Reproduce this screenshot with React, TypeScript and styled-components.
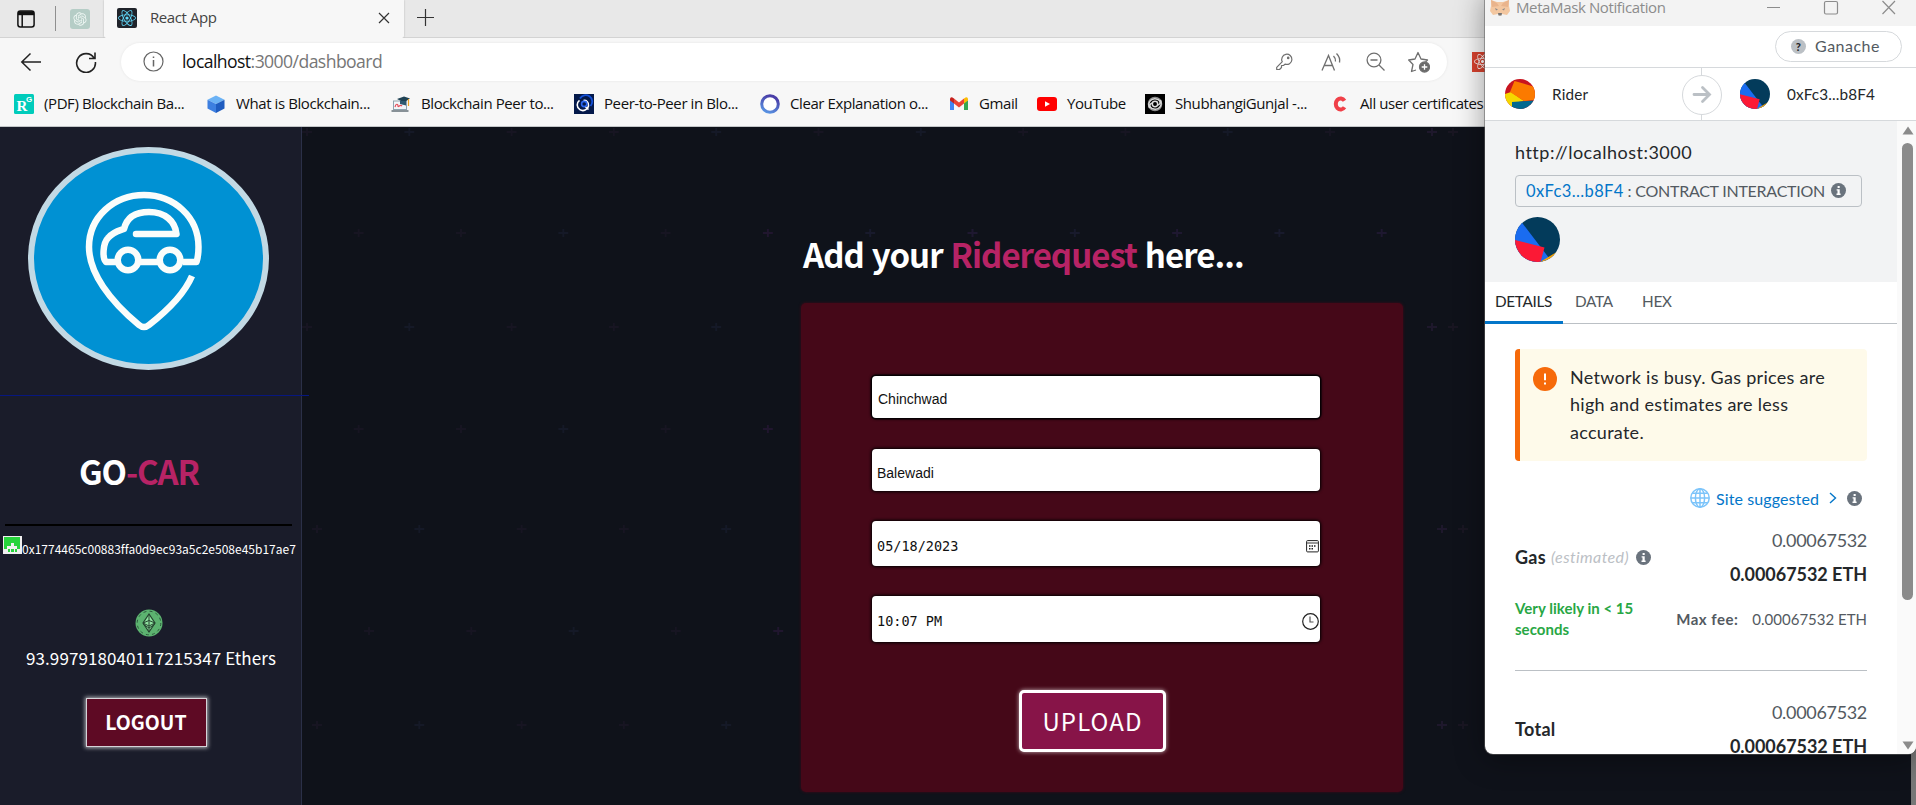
import React from "react";
import styled, { createGlobalStyle, css } from "styled-components";
import { FaReact } from "react-icons/fa";
import { RiOpenaiFill } from "react-icons/ri";

const segoe = `"Open Sans", "Noto Sans", sans-serif`;
const rounded = `"Noto Sans CJK JP", "Noto Sans", sans-serif`;
const euclid = `Lato, "Open Sans", sans-serif`;

const GlobalStyle = createGlobalStyle`
  * { box-sizing: border-box; }
  html, body { margin: 0; padding: 0; overflow: hidden; background: #0f121a; }
  svg { display: block; flex: none; }
`;

const Screen = styled.div`
  position: relative;
  display: flex;
  flex-direction: column;
  width: 1916px;
  height: 805px;
  overflow: hidden;
`;

/* ---------- browser chrome ---------- */

const Chrome = styled.header`
  flex: none;
  height: 127px;
  background: #f7f7f7;
  border-bottom: 1px solid #c3c6c8;
  font-family: ${segoe};
  color: #111;
`;

const TabStrip = styled.div`
  display: flex;
  height: 38px;
  background: #e8e8e8;
  border-bottom: 1px solid #d3d3d3;
`;

const PinnedTabs = styled.div`
  display: flex;
  align-items: center;
  width: 104px;
  height: 37px;
  padding-left: 17px;
`;

const StripDivider = styled.span`
  width: 1px;
  height: 25px;
  margin: 0 14px 0 20px;
  background: #8f8f8f;
`;

const PinnedIcon = styled.span`
  display: grid;
  place-items: center;
  width: 20px;
  height: 20px;
  border-radius: 3px;
  background: #b5cdc6;
  color: #eef6f3;
`;

const ActiveTab = styled.div`
  display: flex;
  align-items: center;
  width: 300px;
  height: 38px;
  padding: 0 14px 2px 13px;
  background: #f7f7f7;
  border-radius: 0 0 2px 2px;
  box-shadow: 0 0 2px rgba(0, 0, 0, 0.25);
  clip-path: inset(0 -3px 0 -3px);
`;

const ReactBadge = styled.span`
  display: grid;
  place-items: center;
  width: 20px;
  height: 20px;
  border-radius: 2px;
  background: #20232a;
  color: #61dafb;
`;

const TabTitle = styled.span`
  flex: 1;
  padding: 0 0 2px 13px;
  font-size: 15px;
  line-height: 20px;
  letter-spacing: -0.42px;
  color: #444;
`;

const NewTab = styled.span`
  padding: 9px 0 0 13px;
`;

const Toolbar = styled.div`
  display: flex;
  align-items: center;
  height: 47px;
  padding-left: 20px;
`;

const AddressBar = styled.div`
  display: flex;
  align-items: center;
  width: 1326px;
  height: 38px;
  margin-left: 24px;
  padding: 0 17px 0 22px;
  border-radius: 19px;
  background: #fff;
  box-shadow: 0 0 3px rgba(0, 0, 0, 0.08);
`;

const Url = styled.span`
  flex: 1;
  padding: 0 0 1px 18px;
  font-size: 17.6px;
  line-height: 24px;
  letter-spacing: -0.57px;
  color: #767676;
  b { font-weight: 400; color: #111; }
`;

const AddressTools = styled.div`
  display: flex;
  align-items: center;
  gap: 23px;
`;

const Extension = styled.span`
  display: grid;
  place-items: center;
  width: 20px;
  height: 20px;
  margin-left: 25px;
  background: #d9432f;
  color: #fff;
`;

const Bookmarks = styled.nav`
  display: flex;
  height: 38px;
  padding-left: 14px;
`;

const Bookmark = styled.span<{ $width: number }>`
  display: flex;
  align-items: center;
  flex: none;
  gap: 10px;
  width: ${(p) => p.$width}px;
  font-size: 15px;
  line-height: 20px;
  letter-spacing: -0.41px;
  white-space: nowrap;
`;

const BookmarkText = styled.span`
  padding-bottom: 2px;
`;

/* ---------- page ---------- */

const Page = styled.div`
  position: relative;
  display: flex;
  flex: 1;
  min-height: 0;
  background: #0f121a;
`;

const Starfield = styled.svg`
  position: absolute;
  inset: 0;
`;

const Sidebar = styled.aside`
  position: relative;
  display: flex;
  flex-direction: column;
  align-items: flex-start;
  width: 302px;
  background: #1a1c2a;
  border-right: 1px solid #2b3048;
  font-family: ${rounded};
  color: #fff;
`;

const SidebarRule = styled.span`
  position: absolute;
  left: 0;
  top: 268px;
  width: 309px;
  height: 1px;
  background: #07177f;
`;

const Logo = styled.div`
  width: 241px;
  height: 223px;
  margin: 20px 0 0 28px;
  border: 6px solid #c2d9e4;
  border-radius: 50%;
  background: #0091d3;
  overflow: hidden;
`;

const Accent = styled.span`
  color: #b72365;
`;

const Brand = styled.h1`
  margin: 77px 0 0 79px;
  font-size: 33px;
  line-height: 48px;
  letter-spacing: -1.1px;
  font-weight: 700;
`;

const Rule = styled.hr`
  width: 287px;
  height: 2px;
  margin: 29px 0 0 5px;
  border: 0;
  background: #000;
`;

const Account = styled.div`
  display: flex;
  margin: 10px 0 0 3px;
  font-size: 12px;
  line-height: 25px;
  height: 18px;
  letter-spacing: 0.01px;
`;

const CoinSlot = styled.div`
  margin: 55px 0 0 135px;
`;

const Balance = styled.p`
  margin: 8px 0 0 26px;
  font-size: 17px;
  line-height: 26px;
  letter-spacing: 0.09px;
  white-space: nowrap;
`;

const Logout = styled.button`
  width: 121px;
  height: 49px;
  margin: 27px 0 0 85.5px;
  padding: 0 0 3px;
  border: 1px solid #d6d3d8;
  background: #5e0a24;
  box-shadow: 0 0 4px 1px rgba(255, 255, 255, 0.65);
  font: 700 19.5px ${rounded};
  letter-spacing: 0;
  color: #fff;
`;

const Main = styled.main`
  position: relative;
  flex: 1;
  padding: 102px 0 0 499px;
`;

const Heading = styled.h2`
  margin: 0 0 24px;
  padding-left: 2px;
  font: 700 33px/50px ${rounded};
  letter-spacing: -0.95px;
  word-spacing: 1.3px;
  color: #fff;
  white-space: nowrap;
`;

const Card = styled.form`
  display: flex;
  flex-direction: column;
  width: 602px;
  height: 489px;
  padding: 73px 71px 0;
  border-radius: 5px;
  background: #450818;
  box-shadow: 0 0 3px #450818;
`;

const Field = styled.label<{ $height: number; $gap: number; $drop: number; $mono?: boolean; $focus?: boolean }>`
  display: flex;
  align-items: center;
  justify-content: space-between;
  width: 448px;
  height: ${(p) => p.$height}px;
  margin-bottom: ${(p) => p.$gap}px;
  padding: ${(p) => p.$drop}px 1px 0 ${(p) => (p.$focus ? 6 : 5)}px;
  border-radius: 4px;
  background: #fff;
  box-shadow: 0 0 3px 1px ${(p) => (p.$focus ? "#000, 0 0 0 1.5px #12020a" : "#000")};
  color: #111;
  ${(p) =>
    p.$mono
      ? css`font: 13.5px "DejaVu Sans Mono", monospace;`
      : css`font: 14px "Liberation Sans", Arial, sans-serif;`}
`;

const Upload = styled.button`
  width: 147px;
  height: 62px;
  margin: 18px 0 0 147px;
  padding: 0 0 2px;
  border: 3px solid #fff;
  border-radius: 5px;
  background: #871448;
  box-shadow: 0 0 4px rgba(255, 255, 255, 0.7);
  font: 400 24px ${rounded};
  letter-spacing: 1.1px;
  color: #fff;
`;

const PageScrollbar = styled.span`
  position: absolute;
  right: 0;
  top: 0;
  width: 5px;
  height: 100%;
  background: #777;
`;

/* ---------- wallet popup window ---------- */

const Popup = styled.section`
  position: absolute;
  left: 1485px;
  top: 0;
  display: flex;
  flex-direction: column;
  width: 431px;
  height: 754px;
  overflow: hidden;
  border-radius: 0 0 8px 8px;
  background: #fff;
  font-family: ${euclid};
  color: #24272a;
`;

const PopupShadow = styled.div`
  position: absolute;
  left: 1485px;
  top: -10px;
  width: 431px;
  height: 764px;
  border-radius: 8px;
  box-shadow: 0 0 0 1px rgba(95, 95, 95, 0.55), 0 4px 30px rgba(0, 0, 0, 0.4);
`;

const TitleBar = styled.div`
  display: flex;
  flex: none;
  height: 26px;
  padding-left: 5px;
  background: #f3f3f3;
  font: 15px/17px ${segoe};
  letter-spacing: -0.38px;
  color: #8c8c8c;
`;

const WindowTitle = styled.span`
  flex: 1;
  padding-left: 6px;
  margin-top: -1px;
`;

const WindowButtons = styled.span`
  padding: 0 20px 0 0;
`;

const NetworkBar = styled.div`
  display: flex;
  flex: none;
  justify-content: flex-end;
  height: 42px;
  padding: 5px 14px 0 0;
  border-bottom: 1px solid #d6d9dc;
`;

const NetworkPill = styled.div`
  display: flex;
  align-items: center;
  width: 127px;
  height: 31px;
  padding: 0 0 1px 15px;
  gap: 9px;
  border: 1px solid #d6d9dc;
  border-radius: 16px;
  font-size: 16px;
  line-height: 20px;
  letter-spacing: 0.5px;
  color: #535a61;
`;

const Parties = styled.div`
  display: flex;
  flex: none;
  height: 53px;
  border-bottom: 1px solid #d6d9dc;
`;

const Party = styled.div<{ $width: number; $pad: number; $gap: number; $spacing: number }>`
  display: flex;
  align-items: center;
  width: ${(p) => p.$width}px;
  padding-left: ${(p) => p.$pad}px;
  gap: ${(p) => p.$gap}px;
  font-size: 15.3px;
  line-height: 20px;
  letter-spacing: ${(p) => p.$spacing}px;
`;

const Body = styled.div`
  display: flex;
  flex: 1;
  min-height: 0;
`;

const Scroller = styled.div`
  width: 412px;
  overflow: hidden;
`;

const ScrollTrack = styled.div`
  display: flex;
  flex-direction: column;
  justify-content: space-between;
  align-items: center;
  width: 19px;
  padding: 5px 0 4px 2px;
  background: #fafafa;
`;

const Thumb = styled.span`
  width: 11px;
  height: 457px;
  margin: 8px 0 auto;
  border-radius: 6px;
  background: #8b8b8b;
`;

const Summary = styled.div`
  height: 161px;
  padding: 19px 30px 0;
  background: #f2f3f4;
`;

const Origin = styled.p`
  margin: 0 0 11px;
  font-size: 18px;
  line-height: 24px;
  letter-spacing: 0.5px;
`;

const Contract = styled.div`
  display: flex;
  align-items: center;
  width: 347px;
  height: 32px;
  margin-bottom: 10px;
  padding: 0 0 1px 10px;
  border: 1px solid #bbc0c5;
  border-radius: 4px;
  white-space: pre;
  font-size: 16px;
  letter-spacing: -0.25px;
  color: #535a61;
  svg { margin-left: 6px; }
`;

const Address = styled.span`
  font-size: 16.5px;
  letter-spacing: 0.38px;
  color: #0376c9;
`;

const Tabs = styled.div`
  display: flex;
  height: 42px;
  border-bottom: 1px solid #bbc0c5;
`;

const Tab = styled.span<{ $width: number; $active?: boolean }>`
  width: ${(p) => p.$width}px;
  height: 42px;
  padding-left: ${(p) => (p.$active ? 10 : 12)}px;
  font-size: 15.3px;
  line-height: 39px;
  letter-spacing: -0.3px;
  color: ${(p) => (p.$active ? "#24272a" : "#535a61")};
  border-bottom: ${(p) => (p.$active ? "3px solid #0376c9" : "0")};
`;

const Details = styled.div`
  padding: 25px 30px 0;
`;

const Alert = styled.div`
  display: flex;
  width: 352px;
  height: 112px;
  padding: 15px 0 0 13px;
  gap: 13px;
  border-left: 5px solid #f66a0a;
  border-radius: 4px;
  background: #fefaea;
  font-size: 18px;
  line-height: 27.4px;
  letter-spacing: 0.28px;
  svg { margin-top: 3px; }
`;

const Suggested = styled.div`
  display: flex;
  align-items: center;
  justify-content: flex-end;
  height: 20px;
  margin: 27px 5px 20px 0;
  font-size: 16px;
  letter-spacing: 0.1px;
  color: #0376c9;
`;

const SuggestedText = styled.span`
  margin: 0 10px 0 6px;
`;

const Row = styled.div`
  display: flex;
  align-items: center;
  justify-content: space-between;
`;

const RowLabel = styled.div`
  display: flex;
  align-items: center;
  font-size: 18px;
  line-height: 24px;
  font-weight: 700;
  letter-spacing: 0.3px;
`;

const Estimated = styled.em`
  margin: 0 7px 0 5px;
  font-size: 16px;
  font-weight: 400;
  letter-spacing: 0.4px;
  color: #bbc0c5;
`;

const Amounts = styled.div`
  display: flex;
  flex-direction: column;
  gap: 10px;
  text-align: right;
  font-size: 18px;
  line-height: 24px;
`;

const Fiat = styled.span`
  letter-spacing: -0.32px;
  color: #535a61;
`;

const Eth = styled.strong`
  letter-spacing: -0.04px;
`;

const Likely = styled.p`
  margin: 0;
  font-size: 15px;
  line-height: 21px;
  font-weight: 700;
  letter-spacing: 0.03px;
  color: #28a745;
`;

const MaxFee = styled.div`
  display: flex;
  gap: 14px;
  padding-bottom: 1px;
  font-size: 15px;
  color: #535a61;
  strong { letter-spacing: 0.5px; }
`;

const FeeRow = styled(Row)`
  height: 42px;
  margin: 12px 0 30px;
`;

const Divider = styled.hr`
  height: 1px;
  margin: 0 0 29px;
  border: 0;
  background: #bbc0c5;
`;

/* ---------- drawings ---------- */

const PLUS = "M-5 0H5M0 -4V4";
const rowsOfPluses = [
  { x: 307, y: 5, tint: [0, 1, 0, 0, 1] },
  { x: 358.7, y: 106, tint: [0, 0, 1, 0, 2] },
  { x: 307, y: 200, tint: [0, 1, 0, 0, 1] },
  { x: 358.7, y: 302, tint: [0, 0, 1, 0, 2] },
  { x: 317, y: 402, tint: [0, 1, 0, 0, 1] },
  { x: 369, y: 504, tint: [0, 0, 1, 0, 2] },
  { x: 317, y: 598, tint: [0, 1, 0, 0, 1] },
];
const tints = ["#171522", "#151927", "#20162e"];

function Stars() {
  return (
    <Starfield width="1916" height="678">
      {rowsOfPluses.map((row, r) =>
        Array.from({ length: 11 }, (_, i) => (
          <path
            key={`${r}-${i}`}
            d={PLUS}
            transform={`translate(${row.x + i * 102.3} ${row.y})`}
            stroke={i > 4 && r === 1 ? (i % 2 ? "#181a2c" : "#1e1830") : tints[row.tint[i % 5]]}
            strokeWidth="2"
          />
        ))
      )}
      {[[1432, 5], [1453, 5], [1432, 200], [1453, 200], [1442, 402], [1463, 402], [1442, 598], [1463, 598]].map(
        ([x, y], i) => (
          <path key={i} d={PLUS} transform={`translate(${x} ${y})`} stroke={i % 2 ? "#191622" : "#1e182c"} strokeWidth="2" />
        )
      )}
    </Starfield>
  );
}

const InfoDot = () => (
  <svg width="15" height="15" viewBox="0 0 15 15">
    <circle cx="7.5" cy="7.5" r="7.5" fill="#6a737d" />
    <rect x="6.6" y="3" width="2.1" height="2" fill="#fff" />
    <path d="M5.6 6.2H8.7V10.6H9.6V11.9H5.5V10.6H6.5V7.4H5.6Z" fill="#fff" />
  </svg>
);

const BlueAvatar = ({ size }: { size: number }) => (
  <svg width={size} height={size} viewBox="0 0 45 45">
    <clipPath id={`round${size}`}><circle cx="22.5" cy="22.5" r="22.5" /></clipPath>
    <g clipPath={`url(#round${size})`}>
      <rect width="45" height="45" fill="#033b5b" />
      <path d="M0 0H3L8 7L34 41L45 36V45H0Z" fill="#1a6cf0" />
      <path d="M25 45L45 33V45Z" fill="#f9a300" />
      <path d="M0 23L29.5 30.5L25.5 45H0Z" fill="#fb1935" />
    </g>
  </svg>
);

const RiderAvatar = () => (
  <svg width="30" height="30" viewBox="0 0 30 30">
    <clipPath id="rider"><circle cx="15" cy="15" r="15" /></clipPath>
    <g clipPath="url(#rider)">
      <rect width="30" height="30" fill="#c8141f" />
      <path d="M0 15L6 13L19 22L8 24V30H0Z" fill="#f5d800" />
      <path d="M9.5 2L30 8V21L19 22L5 13Z" fill="#fb7a00" />
      <path d="M7 23L30 21.5V30H7Z" fill="#01688f" />
    </g>
  </svg>
);

const CarPin = () => (
  <svg width="229" height="211" viewBox="34 153 229 211" fill="none" stroke="#fafdfb" strokeWidth="6.5" strokeLinejoin="round">
    <path d="M192 276C186 290 172 307 149 325Q144 329 139 325C110 301 89 273 89 247C89 217 114 195 144 195C174 195 198.5 217 198.5 247Q198.5 256 196.5 262H183" />
    <path d="M157 262H141M115 262H106C102 258 103 243 108 238C113 232 118 231 124 229C127 216 137 212 149 212C165 212 175 221 176.5 234H136" strokeLinecap="round" />
    <circle cx="128" cy="260" r="10.3" />
    <circle cx="170" cy="260" r="10.3" />
  </svg>
);

const Coin = () => (
  <svg width="28" height="28" viewBox="0 0 28 28">
    <circle cx="14" cy="14" r="13.5" fill="#5cb370" />
    <circle cx="14" cy="14" r="11.8" fill="none" stroke="#2c5a3c" strokeWidth="1" strokeDasharray="3 3.2" />
    <path d="M14 5L20 14L14 23L8 14Z" fill="#8fe3a0" stroke="#24442f" strokeWidth="1.2" />
    <path d="M14 5V23M8 14L14 11.5L20 14M8 14L14 17L20 14M8.5 15.5L14 19L19.5 15.5" fill="none" stroke="#24442f" strokeWidth="1" />
  </svg>
);

const Identicon = () => (
  <svg width="19" height="18" viewBox="0 0 19 18" shapeRendering="crispEdges">
    <rect width="19" height="18" fill="#f0f0f0" />
    <path d="M1 1H17V13H1Z" fill="#27d43c" />
    <path d="M8 7H11V10H14V13H15V16H12V13H11V16H8V13H7V16H4V10H8Z" fill="#f0f0f0" />
    <path d="M5 13H7V16H5ZM12 13H14V16H12ZM8 13H11V16H8Z" fill="#27d43c" />
    <path d="M1 13H4V16H1Z" fill="#f0f0f0" />
  </svg>
);

const Fox = () => (
  <svg width="20" height="17" viewBox="0 0 20 17">
    <path d="M1 0L7 2H13L19 0V6L20 11L17 15L12 14L10 16L8 14L3 15L0 11L1 6Z" fill="#f3c7a0" />
    <path d="M1 0L7 3L9 6L2 7ZM19 0L13 3L11 6L18 7Z" fill="#e9b48c" />
    <path d="M5 8L8 9.5L6 10.5ZM15 8L12 9.5L14 10.5Z" fill="#8d8b8b" />
    <path d="M8 13H12L11.5 15.5H8.5Z" fill="#777" />
  </svg>
);

const bookmarks: { text: string; width: number; icon: React.ReactNode }[] = [
  {
    text: "(PDF) Blockchain Ba...",
    width: 192,
    icon: (
      <svg width="20" height="20" viewBox="0 0 20 20">
        <rect width="20" height="20" rx="1.5" fill="#00ccbb" />
        <text x="2.5" y="16.5" fontFamily="Liberation Serif, serif" fontWeight="700" fontSize="15" fill="#fff">R</text>
        <text x="12" y="8.3" fontFamily="Liberation Sans, sans-serif" fontWeight="700" fontSize="8" fill="#fff">G</text>
      </svg>
    ),
  },
  {
    text: "What is Blockchain...",
    width: 185,
    icon: (
      <svg width="20" height="20" viewBox="0 0 20 20">
        <path d="M10 1.5L18.5 5.7L10 10L1.5 5.7Z" fill="#6bb2f5" />
        <path d="M1.5 5.7L10 10V19L1.5 14.5Z" fill="#3d7fe0" />
        <path d="M18.5 5.7L10 10V19L18.5 14.5Z" fill="#1f5cc0" />
      </svg>
    ),
  },
  {
    text: "Blockchain Peer to...",
    width: 183,
    icon: (
      <svg width="20" height="20" viewBox="0 0 20 20">
        <rect x="2.5" y="7" width="13" height="8.5" fill="#f3f6f8" stroke="#8fa3ae" />
        <path d="M0.5 17H17.5" stroke="#7b858c" strokeWidth="1.8" />
        <path d="M4 13C5 9 7 10 7 12S9 10 11 12" stroke="#e64b58" strokeWidth="1.2" fill="none" />
        <path d="M6 5L13 2.500L19 4.500L13 8.500Z" fill="#1f4254" />
        <path d="M9 7V10L15 11.5V7" fill="#2f5a70" />
        <path d="M17.5 5V12" stroke="#e9a227" strokeWidth="1.2" />
      </svg>
    ),
  },
  {
    text: "Peer-to-Peer in Blo...",
    width: 186,
    icon: (
      <svg width="20" height="20" viewBox="0 0 20 20" fill="none">
        <rect width="20" height="20" fill="#04194a" />
        <path d="M6 4.500A6.500 6.500 0 1 1 16.500 12" stroke="#1450d8" strokeWidth="1.8" />
        <path d="M5.500 6.300A5.700 5.700 0 1 0 14.500 12C15 8 12 6 9.500 6.500" stroke="#fff" strokeWidth="1.6" />
        <circle cx="10.200" cy="10" r="2.600" stroke="#2b66f0" strokeWidth="1.6" />
        <path d="M11.500 13L14.500 15.500" stroke="#fff" strokeWidth="1.4" />
      </svg>
    ),
  },
  {
    text: "Clear Explanation o...",
    width: 189,
    icon: (
      <svg width="20" height="20" viewBox="0 0 20 20">
        <linearGradient id="ring" x1="0" y1="1" x2="0.4" y2="0">
          <stop offset="0" stopColor="#5a9be8" />
          <stop offset="1" stopColor="#4a3fa8" />
        </linearGradient>
        <circle cx="10" cy="10" r="8.3" fill="#fff" stroke="url(#ring)" strokeWidth="3" />
      </svg>
    ),
  },
  {
    text: "Gmail",
    width: 88,
    icon: (
      <svg width="20" height="20" viewBox="0 0 20 20">
        <path d="M1 6V16H5V8.5Z" fill="#4285f4" />
        <path d="M19 6V16H15V8.5Z" fill="#34a853" />
        <path d="M5 4.5L10 8.5L15 4.5V9.5L10 13.5L5 9.5Z" fill="#ea4335" />
        <path d="M1 5Q1 3 3 3.2L5 4.5V9.5L1 6.5Z" fill="#c5221f" />
        <path d="M19 5Q19 3 17 3.2L15 4.5V9.5L19 6.5Z" fill="#fbbc04" />
      </svg>
    ),
  },
  {
    text: "YouTube",
    width: 108,
    icon: (
      <svg width="20" height="20" viewBox="0 0 20 20">
        <rect y="3" width="20" height="14" rx="3" fill="#f00" />
        <path d="M8 7.3V12.7L13 10Z" fill="#fff" />
      </svg>
    ),
  },
  {
    text: "ShubhangiGunjal -...",
    width: 185,
    icon: (
      <svg width="20" height="20" viewBox="0 0 20 20" fill="none">
        <rect width="20" height="20" fill="#000" />
        <circle cx="10" cy="10" r="6.7" stroke="#8a8a8a" strokeWidth="1.2" />
        <circle cx="10" cy="10" r="2.7" stroke="#ddd" strokeWidth="1.5" />
        <path d="M4.500 14C2 8 7 3 13 5.500C16 7 15.500 10 13 11M15.500 6C18 12 13 17 7 14.500C4 13 4.500 10 7 9" stroke="#d8d8d8" strokeWidth="1.4" />
      </svg>
    ),
  },
  {
    text: "All user certificates",
    width: 160,
    icon: (
      <svg width="20" height="20" viewBox="0 0 20 20" fill="none">
        <path d="M14.5 6.8A4.8 5.5 0 1 0 14.5 13.2" stroke="#f04048" strokeWidth="4" />
      </svg>
    ),
  },
];

export default function App() {
  return (
    <Screen>
      <GlobalStyle />
      <Chrome>
        <TabStrip>
          <PinnedTabs>
            <svg width="18" height="18" viewBox="0 0 18 18" fill="none" stroke="#111" strokeWidth="1.5">
              <rect x="0.9" y="0.9" width="16.2" height="16.2" rx="2.5" />
              <path d="M1 3.2H17" strokeWidth="4" />
              <path d="M5.2 4V17" />
            </svg>
            <StripDivider />
            <PinnedIcon><RiOpenaiFill size={16} /></PinnedIcon>
          </PinnedTabs>
          <ActiveTab>
            <ReactBadge><FaReact size={18} /></ReactBadge>
            <TabTitle>React App</TabTitle>
            <svg width="12" height="12" viewBox="0 0 12 12" stroke="#333" strokeWidth="1.2">
              <path d="M1 1L11 11M11 1L1 11" />
            </svg>
          </ActiveTab>
          <NewTab>
            <svg width="17" height="17" viewBox="0 0 17 17" stroke="#333" strokeWidth="1.2">
              <path d="M8.5 0V17M0 8.5H17" />
            </svg>
          </NewTab>
        </TabStrip>
        <Toolbar>
          <svg width="21" height="20" viewBox="0 0 21 20" fill="none" stroke="#222" strokeWidth="1.5">
            <path d="M21 10H2M10.5 1.5L1.8 10L10.5 18.5" />
          </svg>
          <svg width="56" height="22" viewBox="0 0 56 22" fill="none" stroke="#222" strokeWidth="1.6">
            <path d="M53 7A9.4 9.4 0 1 0 54.4 11M54 1.5V7.5H48" />
          </svg>
          <AddressBar>
            <svg width="21" height="21" viewBox="0 0 21 21" fill="none" stroke="#666" strokeWidth="1.2">
              <circle cx="10.5" cy="10.5" r="9.5" />
              <path d="M10.5 9V15.5M10.5 5.5V7" strokeWidth="1.5" />
            </svg>
            <Url><b>localhost</b>:3000/dashboard</Url>
            <AddressTools>
              <svg width="20" height="18" viewBox="0 0 20 18" fill="none" stroke="#6f6f6f" strokeWidth="1.2">
                <path d="M6.300 8.700A5.1 5.1 0 1 1 9 11.100L7.500 12.500H5.500V14.5L3.500 16.500H0.700V14.3Z" strokeLinejoin="round" />
                <circle cx="12.200" cy="4.900" r="0.7" fill="#6f6f6f" />
              </svg>
              <svg width="24" height="20" viewBox="0 0 24 20" fill="none" stroke="#6f6f6f" strokeWidth="1.3">
                <path d="M3 18.500L9.500 3.5L15.500 18.500M5.5 13.500H13.5M14.5 4Q17 6.5 16.5 9.5M17.5 1.5Q21.5 5.5 20.5 10.5" />
              </svg>
              <svg width="19" height="19" viewBox="0 0 19 19" fill="none" stroke="#6f6f6f" strokeWidth="1.3">
                <circle cx="8" cy="8" r="6.9" />
                <path d="M13 13L18.5 18.5M4.5 8H11.5" />
              </svg>
              <svg width="22" height="22" viewBox="1 0 22 22" fill="none" stroke="#6f6f6f" strokeWidth="1.3" strokeLinejoin="round">
                <path d="M9 19L4.500 20.5L6 13.5L1.7 9L8 8L11 1.500L14 8L20.5 9L18.5 11" />
                <circle cx="17.500" cy="16" r="5" fill="#6a6a6a" />
                <path d="M14.700 16H20.300M17.500 13.2V18.8" stroke="#fff" />
              </svg>
            </AddressTools>
          </AddressBar>
          <Extension><FaReact size={17} /></Extension>
        </Toolbar>
        <Bookmarks>
          {bookmarks.map((b) => (
            <Bookmark key={b.text} $width={b.width}>{b.icon}<BookmarkText>{b.text}</BookmarkText></Bookmark>
          ))}
        </Bookmarks>
      </Chrome>

      <Page>
        <Stars />
        <Sidebar>
          <Logo><CarPin /></Logo>
          <SidebarRule />
          <Brand>GO<Accent>-CAR</Accent></Brand>
          <Rule />
          <Account><Identicon />0x1774465c00883ffa0d9ec93a5c2e508e45b17ae7</Account>
          <CoinSlot><Coin /></CoinSlot>
          <Balance>93.997918040117215347 Ethers</Balance>
          <Logout>LOGOUT</Logout>
        </Sidebar>
        <Main>
          <Heading>Add your <Accent>Riderequest</Accent> here...</Heading>
          <Card>
            <Field $height={42} $gap={31} $drop={4} $focus>Chinchwad</Field>
            <Field $height={42} $gap={30} $drop={5}>Balewadi</Field>
            <Field $height={45} $gap={30} $drop={5} $mono>
              05/18/2023
              <svg width="13" height="13" viewBox="0 0 13 13" fill="none" stroke="#222">
                <rect x="0.6" y="0.6" width="11.8" height="11.3" rx="1" />
                <path d="M1 3H12" strokeWidth="1.5" stroke="#777" />
                <path d="M3 6H10.5M3 8.8H8" strokeWidth="1.5" strokeDasharray="1.5 1" />
              </svg>
            </Field>
            <Field $height={46} $gap={30} $drop={4} $mono>
              10:07 PM
              <svg width="17" height="17" viewBox="0 0 17 17" fill="none" stroke="#222" strokeWidth="1.2">
                <circle cx="8.5" cy="8.5" r="7.8" />
                <path d="M8 3.5V9H11.5" stroke="#555" />
              </svg>
            </Field>
            <Upload type="button">UPLOAD</Upload>
          </Card>
        </Main>
        <PageScrollbar />
      </Page>

      <PopupShadow />
      <Popup>
        <TitleBar>
          <Fox />
          <WindowTitle>MetaMask Notification</WindowTitle>
          <WindowButtons>
            <svg width="130" height="17" viewBox="0 0 130 17" fill="none" stroke="#8c8c8c" strokeWidth="1.2">
              <path d="M1 7.5H14M116.5 1L129 14M129 1L116.5 14" />
              <rect x="58.5" y="1.5" width="13" height="12.5" rx="1.5" />
            </svg>
          </WindowButtons>
        </TitleBar>
        <NetworkBar>
          <NetworkPill>
            <svg width="15" height="15" viewBox="0 0 15 15">
              <circle cx="7.5" cy="7.5" r="7.5" fill="#bbc0c5" />
              <text x="7.5" y="11.5" textAnchor="middle" fontFamily="Lato, sans-serif" fontWeight="900" fontSize="11" fill="#24272a">?</text>
            </svg>
            Ganache
          </NetworkPill>
        </NetworkBar>
        <Parties>
          <Party $width={186} $pad={20} $gap={17} $spacing={0.15}><RiderAvatar />Rider</Party>
          <svg width="62" height="52" viewBox="0 0 62 52" fill="none">
            <path d="M30.5 0V52" stroke="#d6d9dc" />
            <circle cx="31" cy="27" r="19.5" fill="#fff" stroke="#d6d9dc" />
            <path d="M23 26.5H38M31.5 19.5L38.5 26.5L31.5 33.5" stroke="#bbc0c5" strokeWidth="2.8" strokeLinecap="round" />
          </svg>
          <Party $width={180} $pad={7} $gap={17} $spacing={0.13}><BlueAvatar size={30} />0xFc3...b8F4</Party>
        </Parties>
        <Body>
          <Scroller>
            <Summary>
              <Origin>http://localhost:3000</Origin>
              <Contract><Address>0xFc3...b8F4</Address> : CONTRACT INTERACTION<InfoDot /></Contract>
              <BlueAvatar size={45} />
            </Summary>
            <Tabs>
              <Tab $width={78} $active>DETAILS</Tab>
              <Tab $width={67}>DATA</Tab>
              <Tab $width={70}>HEX</Tab>
            </Tabs>
            <Details>
              <Alert>
                <svg width="24" height="24" viewBox="0 0 24 24">
                  <circle cx="12" cy="12" r="12" fill="#f66a0a" />
                  <path d="M12 6.5V13.3M12 15.5V17.5" stroke="#fff" strokeWidth="2" />
                </svg>
                <span>Network is busy. Gas prices are<br />high and estimates are less<br />accurate.</span>
              </Alert>
              <Suggested>
                <svg width="20" height="20" viewBox="0 0 20 20" fill="none" stroke="#7cc4fa" strokeWidth="1.5">
                  <circle cx="10" cy="10" r="9.2" />
                  <ellipse cx="10" cy="10" rx="4.6" ry="9.2" />
                  <path d="M10 1V19M1 10H19M2.5 5.3H17.5M2.5 14.7H17.5" />
                </svg>
                <SuggestedText>Site suggested</SuggestedText>
                <svg width="18" height="12" viewBox="0 0 18 12" fill="none" stroke="#0376c9" strokeWidth="1.4">
                  <path d="M1 1L6.5 6L1 11" />
                </svg>
                <InfoDot />
              </Suggested>
              <Row>
                <RowLabel>Gas<Estimated>(estimated)</Estimated><InfoDot /></RowLabel>
                <Amounts><Fiat>0.00067532</Fiat><Eth>0.00067532 ETH</Eth></Amounts>
              </Row>
              <FeeRow>
                <Likely>Very likely in &lt; 15<br />seconds</Likely>
                <MaxFee><strong>Max fee:</strong><span>0.00067532 ETH</span></MaxFee>
              </FeeRow>
              <Divider />
              <Row>
                <RowLabel>Total</RowLabel>
                <Amounts><Fiat>0.00067532</Fiat><Eth>0.00067532 ETH</Eth></Amounts>
              </Row>
            </Details>
          </Scroller>
          <ScrollTrack>
            <svg width="12" height="9" viewBox="0 0 12 9"><path d="M6 0.5L11.5 8.5H0.5Z" fill="#8b8b8b" /></svg>
            <Thumb />
            <svg width="12" height="9" viewBox="0 0 12 9"><path d="M6 8.5L11.5 0.5H0.5Z" fill="#8b8b8b" /></svg>
          </ScrollTrack>
        </Body>
      </Popup>
    </Screen>
  );
}
